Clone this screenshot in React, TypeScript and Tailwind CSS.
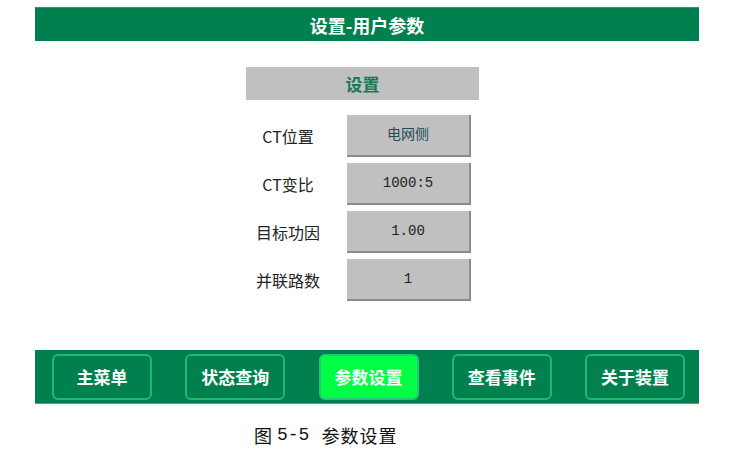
import React from 'react';

const rows = [
  { label: 'CT位置', value: '电网侧', tone: 'text-[#1d4d55]' },
  { label: 'CT变比', value: '1000:5', tone: 'text-[#222]' },
  { label: '目标功因', value: '1.00', tone: 'text-[#222]' },
  { label: '并联路数', value: '1', tone: 'text-[#222]' },
];

const tabs = [
  { name: '主菜单', active: false },
  { name: '状态查询', active: false },
  { name: '参数设置', active: true },
  { name: '查看事件', active: false },
  { name: '关于装置', active: false },
];

const cjk = "font-['Noto_Sans_CJK_SC',sans-serif]";

export default function App() {
  return (
    <div className={`w-[729px] h-[454px] bg-white overflow-hidden ${cjk}`}>
      <div className="mt-[7px] ml-[35px] w-[664px] h-[34px] bg-[#00804f] border-t border-[#4f8580] flex items-center justify-center text-white font-bold text-[18px] leading-none">
        设置-用户参数
      </div>

      <div className="ml-[246px] mt-[26px] w-[233px] h-[33px] bg-[#c0c0c0] flex items-center justify-center text-[#167a55] font-bold text-[17px]">
        设置
      </div>

      <div className="ml-[246px] mt-[15px] flex flex-col gap-[6px]">
        {rows.map((r) => (
          <div key={r.label} className="flex items-center h-[42px]">
            <div className="w-[84px] text-center text-[16px] text-[#222]">{r.label}</div>
            <div
              className={`ml-[17px] w-[124px] h-[42px] bg-[#c0c0c0] border-r-2 border-b-2 border-[#8c8c8c] flex items-center justify-center text-[14px] ${r.tone} font-['Liberation_Mono','Noto_Sans_CJK_SC',monospace]`}
            >
              {r.value}
            </div>
          </div>
        ))}
      </div>

      <div className="mt-[49px] ml-[35px] w-[664px] h-[54px] bg-[#00804f] border-b border-[#6f8fa8] flex items-center justify-between pl-[17px] pr-[14px]">
        {tabs.map((t) => (
          <div
            key={t.name}
            className={`w-[100px] h-[46px] rounded-[6px] border-2 flex items-center justify-center text-white font-bold text-[17px] ${
              t.active ? 'bg-[#00ff44] border-[#22c877]' : 'bg-[#00804f] border-[#1fb874]'
            }`}
          >
            {t.name}
          </div>
        ))}
      </div>

      <div className="mt-[22px] ml-[254px] flex items-center text-[18px] text-[#111] leading-none">
        <span>图</span>
        <span className="ml-[5px] font-['Liberation_Mono',monospace]">5-5</span>
        <span className="ml-[12px] tracking-[1px]">参数设置</span>
      </div>
    </div>
  );
}
